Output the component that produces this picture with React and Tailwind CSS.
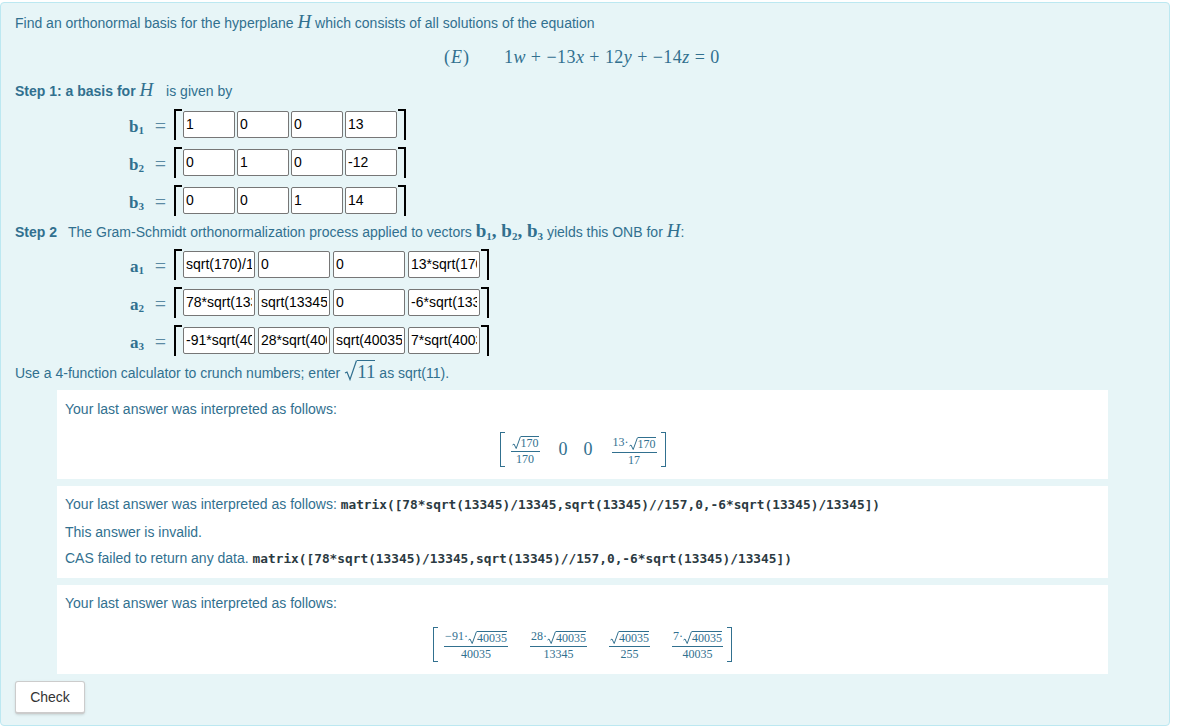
const serif = "font-['Liberation_Serif',serif]";

const M = ({ children }) => <span className={`${serif} italic text-[19px] leading-none`}>{children}</span>;

const Sqrt = ({ children }) => (
  <span className="inline-flex items-stretch align-baseline">
    <svg width="9" height="14" viewBox="0 0 9 14" className="self-end shrink-0">
      <path d="M0.5 9 L2 8 L4.2 12.5 L8.5 0.5" fill="none" stroke="#31708f" strokeWidth="1" />
    </svg>
    <span className="border-t border-[#31708f] leading-[13px] text-[12px]">{children}</span>
  </span>
);

const Frac = ({ top, bottom }) => (
  <span className={`inline-flex flex-col items-center ${serif} text-[12px]`}>
    <span className="flex items-end h-[17px] px-[1px] whitespace-nowrap">{top}</span>
    <span className="self-stretch border-t border-[#31708f] mt-[1px]" />
    <span className="leading-[15px]">{bottom}</span>
  </span>
);

const Bracket = ({ side }) => (
  <span className={`w-[5px] self-stretch border-y ${side === 'left' ? 'border-l' : 'border-r'} border-[#31708f]`} />
);

const MatrixRow = ({ name, sub, values, width, gap }) => (
  <div className="flex items-center h-[38px]">
    <span className={`w-[129px] text-right ${serif} font-bold text-[17px] pt-[5px] leading-[20px]`}>
      {name}<sub className="text-[11px] leading-none">{sub}</sub>
    </span>
    <span className={`w-[22px] text-right ${serif} text-[20px] pt-[3px] leading-[20px] text-[#5b8aa3]`}>=</span>
    <div className="flex h-[31px] ml-[8px]">
      <span className="w-[8px] border-l-2 border-t-2 border-black" />
      <div className={`flex items-center ml-[1px] mr-[1px] ${gap}`}>
        {values.map((v, i) => (
          <input
            key={i}
            readOnly
            value={v}
            style={{ width }}
            className="h-[27px] px-[2px] bg-white border border-[#767676] rounded-[2px] text-[14px] text-black font-['Liberation_Sans',sans-serif] outline-none"
          />
        ))}
      </div>
      <span className="w-[8px] border-r-2 border-t-2 border-black" />
    </div>
  </div>
);

const Answer = ({ className, children }) => <div className={`bg-white ml-[42px] w-[1051px] px-[8px] ${className}`}>{children}</div>;

const Code = ({ children }) => (
  <code className="font-['DejaVu_Sans_Mono',monospace] text-[12.8px] font-bold text-[#2b3a42]">{children}</code>
);

const expr = 'matrix([78*sqrt(13345)/13345,sqrt(13345)//157,0,-6*sqrt(13345)/13345])';

export default function App() {
  return (
    <div className="w-[1186px] h-[728px] bg-white pt-[2px] font-['Liberation_Sans',sans-serif] text-[14px] text-[#31708f]">
      <div className="w-[1170px] h-[724px] bg-[#e7f5f7] border border-[#bce8f1] rounded-[4px] px-[14px] pt-[9px]">
        <p className="h-[20px] leading-[20px]">
          Find an orthonormal basis for the hyperplane <M>H</M> which consists of all solutions of the equation
        </p>
        <div className={`flex h-[46px] pt-[4px] items-center ${serif} text-[18px] pl-[429px] whitespace-nowrap`}>
          <span className="tracking-[1px]">(<i>E</i>)</span>
          <span className="ml-[34px] tracking-[0.45px]">
            1<i>w</i> + −13<i>x</i> + 12<i>y</i> + −14<i>z</i> = 0
          </span>
        </div>
        <p className="h-[20px] leading-[20px] mt-[2px]">
          <b>Step 1: a basis for</b> <M>H</M> <span className="ml-[9px]">is given by</span>
        </p>
        <div className="mt-[5px]">
          <MatrixRow name="b" sub="1" values={['1', '0', '0', '13']} width={52} gap="gap-[2px]" />
          <MatrixRow name="b" sub="2" values={['0', '1', '0', '-12']} width={52} gap="gap-[2px]" />
          <MatrixRow name="b" sub="3" values={['0', '0', '1', '14']} width={52} gap="gap-[2px]" />
        </div>
        <p className="h-[20px] leading-[20px] mt-[2px] whitespace-nowrap">
          <b>Step 2</b>
          <span className="ml-[11px]">The Gram-Schmidt orthonormalization process applied to vectors</span>{' '}
          <span className={`${serif} font-bold text-[19px]`}>
            b<sub className="text-[11px] leading-none">1</sub>, b<sub className="text-[11px] leading-none">2</sub>, b<sub className="text-[11px] leading-none">3</sub>
          </span>{' '}
          yields this ONB for <M>H</M>:
        </p>
        <div className="mt-[4px]">
          <MatrixRow name="a" sub="1" values={['sqrt(170)/170', '0', '0', '13*sqrt(170)/17']} width={72} gap="gap-[3px]" />
          <MatrixRow name="a" sub="2" values={['78*sqrt(13345)/13345', 'sqrt(13345)//157', '0', '-6*sqrt(13345)/13345']} width={72} gap="gap-[3px]" />
          <MatrixRow name="a" sub="3" values={['-91*sqrt(40035)/40035', '28*sqrt(40035)/13345', 'sqrt(40035)/255', '7*sqrt(40035)/40035']} width={72} gap="gap-[3px]" />
        </div>
        <p className="h-[20px] leading-[20px] mt-[1px]">
          Use a 4-function calculator to crunch numbers; enter{' '}
          <span className={`${serif} text-[19px] inline-flex items-stretch align-[-3px] h-[21px]`}>
            <svg width="13" height="21" viewBox="0 0 13 21" className="shrink-0">
              <path d="M1 13 L3 12 L6 19.5 L12.5 0.5" fill="none" stroke="#31708f" strokeWidth="1.2" />
            </svg>
            <span className="border-t border-[#31708f] leading-[21px]">11</span>
          </span>{' '}
          as sqrt(11).
        </p>

        <Answer className="mt-[10px] h-[89px] pt-[9px]">
          <p className="leading-[20px]">Your last answer was interpreted as follows:</p>
          <div className={`flex justify-center mt-[13px] h-[35px] ${serif}`}>
            <div className="flex items-stretch">
              <Bracket side="left" />
              <div className="flex items-center pl-[6px] pr-[4px]">
                <Frac top={<Sqrt>170</Sqrt>} bottom="170" />
                <span className="text-[18px] ml-[19px]">0</span>
                <span className="text-[18px] ml-[16px]">0</span>
                <span className="ml-[19px]"><Frac top={<>13·<Sqrt>170</Sqrt></>} bottom="17" /></span>
              </div>
              <Bracket side="right" />
            </div>
          </div>
        </Answer>

        <Answer className="mt-[7px] h-[92px] pt-[8px]">
          <p className="leading-[20px]">Your last answer was interpreted as follows: <Code>{expr}</Code></p>
          <p className="leading-[20px] mt-[7px]">This answer is invalid.</p>
          <p className="leading-[20px] mt-[6px]">CAS failed to return any data. <Code>{expr}</Code></p>
        </Answer>

        <Answer className="mt-[7px] h-[89px] pt-[8px]">
          <p className="leading-[20px]">Your last answer was interpreted as follows:</p>
          <div className={`flex justify-center mt-[14px] h-[35px] ${serif}`}>
            <div className="flex items-stretch">
              <Bracket side="left" />
              <div className="flex items-center gap-[22px] pl-[6px] pr-[4px]">
                <Frac top={<>−91·<Sqrt>40035</Sqrt></>} bottom="40035" />
                <Frac top={<>28·<Sqrt>40035</Sqrt></>} bottom="13345" />
                <Frac top={<Sqrt>40035</Sqrt>} bottom="255" />
                <Frac top={<>7·<Sqrt>40035</Sqrt></>} bottom="40035" />
              </div>
              <Bracket side="right" />
            </div>
          </div>
        </Answer>

        <button className="mt-[7px] w-[70px] h-[33px] bg-white border border-[#ccc] border-b-2 rounded-[3px] text-[14px] text-[#333] shadow-sm">
          Check
        </button>
      </div>
    </div>
  );
}
